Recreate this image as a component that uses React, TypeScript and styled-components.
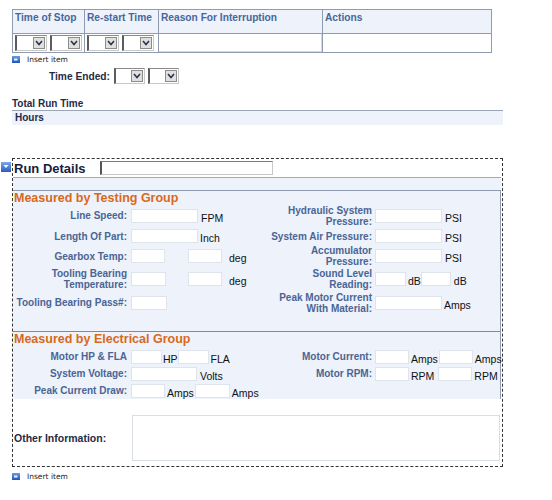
import React from "react";
import styled, { createGlobalStyle } from "styled-components";

const GlobalStyle = createGlobalStyle`
  body {
    margin: 0;
    background: #fff;
    font-family: "Liberation Sans", Arial, sans-serif;
  }
`;

const LINE = "#8e9bb0";
const PALE = "#edf2fb";

const Page = styled.div`
  padding: 9px 0 0 12px;
  width: 491px;
`;

const Table = styled.div`
  display: grid;
  grid-template-columns: 72px 74px 164px 1fr;
  width: 480px;
  box-sizing: border-box;
  border: 1px solid ${LINE};
`;

const HeadCell = styled.div<{ $last?: boolean }>`
  height: 21px;
  background: ${PALE};
  border-bottom: 1px solid ${LINE};
  border-right: ${(p) => (p.$last ? "none" : `1px solid ${LINE}`)};
  padding: 2px 0 0 2px;
  color: #47679a;
  font-weight: bold;
  font-size: 10.2px;
  line-height: 12px;
  white-space: nowrap;
`;

const DataCell = styled.div<{ $last?: boolean; $boxed?: boolean }>`
  height: 18px;
  display: flex;
  align-items: center;
  gap: 3px;
  padding-left: 2px;
  border-right: ${(p) => (p.$last ? "none" : `1px solid ${LINE}`)};
  box-shadow: ${(p) => (p.$boxed ? "inset -1px -1px 0 #d6d9df" : "none")};
`;

const SelectBox = styled.div<{ $w: number }>`
  display: inline-flex;
  align-items: center;
  justify-content: flex-end;
  width: ${(p) => p.$w}px;
  height: 16px;
  box-sizing: border-box;
  background: #fff;
  border-left: 2px solid #5c5c5c;
  border-top: 1px solid #8a8a8a;
  border-right: 1px solid #c9c9c9;
  border-bottom: 1px solid #c9c9c9;
  padding-right: 1px;
`;

const SelectButton = styled.div`
  width: 12px;
  height: 12px;
  box-sizing: border-box;
  background: #e2e0da;
  border: 1px solid #8c8c8c;
  display: flex;
  align-items: center;
  justify-content: center;
`;

const Select = ({ w = 32 }: { w?: number }) => (
  <SelectBox $w={w}>
    <SelectButton>
      <svg width="8" height="6" viewBox="0 0 8 6">
        <polyline points="1,1 4,4.5 7,1" fill="none" stroke="#24345a" strokeWidth="1.6" />
      </svg>
    </SelectButton>
  </SelectBox>
);

const InsertRow = styled.div<{ $top: number }>`
  display: flex;
  align-items: center;
  gap: 7px;
  margin-top: ${(p) => p.$top}px;
  height: 8px;
  font-family: "DejaVu Sans", Verdana, sans-serif;
  font-size: 7.5px;
  color: #222;
`;

const InsertIcon = () => (
  <svg width="8" height="7" viewBox="0 0 8 7">
    <defs>
      <linearGradient id="ig" x1="0" y1="0" x2="0" y2="1">
        <stop offset="0" stopColor="#6b9be0" />
        <stop offset="1" stopColor="#1f55b8" />
      </linearGradient>
    </defs>
    <rect width="8" height="7" fill="url(#ig)" />
    <rect x="2" y="2.5" width="3.5" height="2" fill="#e8f0ff" />
  </svg>
);

const TimeEndedRow = styled.div`
  display: flex;
  align-items: center;
  gap: 3px;
  margin-top: 5px;
  padding-left: 37px;
  height: 16px;
`;

const DarkLabel = styled.span`
  color: #1f2b48;
  font-weight: bold;
  font-size: 10.2px;
  margin-right: 1px;
`;

const TotalTitle = styled.div`
  margin-top: 14px;
  height: 12px;
  line-height: 12px;
  color: #1f2b48;
  font-weight: bold;
  font-size: 10px;
`;

const HoursBar = styled.div`
  border-top: 1px solid #9aa6b8;
  background: ${PALE};
  height: 14px;
  line-height: 14px;
  padding-left: 3px;
  color: #1f2b48;
  font-weight: bold;
  font-size: 10px;
`;

const RunBox = styled.div`
  position: relative;
  margin-top: 33px;
  border: 1px dashed #333;
  padding-right: 1px;
`;

const Badge = styled.div`
  position: absolute;
  left: -12px;
  top: -1px;
  width: 10px;
  height: 10px;
`;

const RunHeader = styled.div`
  display: flex;
  align-items: center;
  height: 18px;
  padding-left: 1px;
  border-bottom: 1px solid #a0aabb;
`;

const RunTitle = styled.div`
  width: 86px;
  color: #13213e;
  font-weight: bold;
  font-size: 13px;
`;

const TextInput = styled.div<{ $w: number; $h?: number }>`
  width: ${(p) => p.$w}px;
  height: ${(p) => p.$h ?? 14}px;
  box-sizing: border-box;
  background: #fff;
  border: 1px solid #dfe3ea;
  flex: none;
`;

const HeaderInput = styled(TextInput)`
  border-left: 2px solid #555;
  border-top: 1px solid #7a7a7a;
  border-right: 1px solid #c8c8c8;
  border-bottom: 1px solid #c8c8c8;
`;

const Band = styled.div`
  height: 12px;
  background: ${PALE};
  border-bottom: 1px solid ${LINE};
`;

const Group = styled.div<{ $rows: string; $bottom: number; $titleH: number; $last?: boolean }>`
  display: grid;
  grid-template-columns: 118px 124px 120px 1fr;
  grid-template-rows: ${(p) => p.$titleH}px ${(p) => p.$rows};
  padding-bottom: ${(p) => p.$bottom}px;
  background: ${PALE};
  border-right: 1px solid ${LINE};
  border-bottom: ${(p) => (p.$last ? "none" : "1px solid #7d8aa0")};
`;

const GroupTitle = styled.div`
  grid-column: 1 / -1;
  padding-left: 1px;
  color: #d9691a;
  font-weight: bold;
  font-size: 12.5px;
  line-height: 14px;
  white-space: nowrap;
`;

const FieldLabel = styled.div<{ $pad: number }>`
  display: flex;
  flex-direction: column;
  justify-content: center;
  align-items: flex-end;
  padding-right: ${(p) => p.$pad}px;
  color: #4a6594;
  font-weight: bold;
  font-size: 10px;
  line-height: 11px;
  white-space: nowrap;
`;

const FieldCell = styled.div`
  display: flex;
  align-items: center;
`;

const Unit = styled.span<{ $ml: number }>`
  margin-left: ${(p) => p.$ml}px;
  margin-top: 4px;
  color: #111;
  font-size: 10.5px;
  flex: none;
`;

const OtherRow = styled.div`
  display: grid;
  grid-template-columns: 118px 1fr;
  align-items: center;
  padding: 16px 1px 5px 1px;
`;

const OtherLabel = styled.div`
  color: #1f2b48;
  font-weight: bold;
  font-size: 10.5px;
`;

const TextArea = styled.div`
  height: 46px;
  box-sizing: border-box;
  background: #fff;
  border: 1px solid #d9dde4;
`;

type Part = { input?: number; unit?: string; ml?: number };
type Side = { label: string[]; parts: Part[] };
type Row = { left: Side; right: Side };

const testingRows: Row[] = [
  {
    left: { label: ["Line Speed:"], parts: [{ input: 67 }, { unit: "FPM", ml: 3 }] },
    right: { label: ["Hydraulic System", "Pressure:"], parts: [{ input: 67 }, { unit: "PSI", ml: 3 }] },
  },
  {
    left: { label: ["Length Of Part:"], parts: [{ input: 67 }, { unit: "Inch", ml: 2 }] },
    right: { label: ["System Air Pressure:"], parts: [{ input: 67 }, { unit: "PSI", ml: 3 }] },
  },
  {
    left: { label: ["Gearbox Temp:"], parts: [{ input: 34 }, { input: 34, ml: 23 }, { unit: "deg", ml: 7 }] },
    right: { label: ["Accumulator", "Pressure:"], parts: [{ input: 67 }, { unit: "PSI", ml: 3 }] },
  },
  {
    left: {
      label: ["Tooling Bearing", "Temperature:"],
      parts: [{ input: 35 }, { input: 34, ml: 22 }, { unit: "deg", ml: 7 }],
    },
    right: {
      label: ["Sound Level", "Reading:"],
      parts: [{ input: 31 }, { unit: "dB", ml: 2 }, { input: 30, ml: 0 }, { unit: "dB", ml: 3 }],
    },
  },
  {
    left: { label: ["Tooling Bearing Pass#:"], parts: [{ input: 36 }] },
    right: { label: ["Peak Motor Current", "With Material:"], parts: [{ input: 67 }, { unit: "Amps", ml: 2 }] },
  },
];

const electricalRows: Row[] = [
  {
    left: {
      label: ["Motor HP & FLA"],
      parts: [{ input: 31 }, { unit: "HP", ml: 1 }, { input: 31, ml: 0 }, { unit: "FLA", ml: 2 }],
    },
    right: {
      label: ["Motor Current:"],
      parts: [{ input: 34 }, { unit: "Amps", ml: 2 }, { input: 34, ml: 1 }, { unit: "Amps", ml: 2 }],
    },
  },
  {
    left: { label: ["System Voltage:"], parts: [{ input: 66 }, { unit: "Volts", ml: 3 }] },
    right: {
      label: ["Motor RPM:"],
      parts: [{ input: 34 }, { unit: "RPM", ml: 2 }, { input: 34, ml: 4 }, { unit: "RPM", ml: 2 }],
    },
  },
  {
    left: {
      label: ["Peak Current Draw:"],
      parts: [{ input: 34 }, { unit: "Amps", ml: 2 }, { input: 35, ml: 1 }, { unit: "Amps", ml: 2 }],
    },
    right: { label: [], parts: [] },
  },
];

function Parts({ parts }: { parts: Part[] }) {
  return (
    <FieldCell>
      {parts.map((p, i) =>
        p.unit ? (
          <Unit key={i} $ml={p.ml ?? 0}>
            {p.unit}
          </Unit>
        ) : (
          <TextInput key={i} $w={p.input!} style={{ marginLeft: p.ml ?? 0 }} />
        )
      )}
    </FieldCell>
  );
}

function FieldRows({ rows }: { rows: Row[] }) {
  return (
    <>
      {rows.map((r, i) => (
        <React.Fragment key={i}>
          <FieldLabel $pad={4}>
            {r.left.label.map((l) => (
              <span key={l}>{l}</span>
            ))}
          </FieldLabel>
          <Parts parts={r.left.parts} />
          <FieldLabel $pad={3}>
            {r.right.label.map((l) => (
              <span key={l}>{l}</span>
            ))}
          </FieldLabel>
          <Parts parts={r.right.parts} />
        </React.Fragment>
      ))}
    </>
  );
}

const heads = ["Time of Stop", "Re-start Time", "Reason For Interruption", "Actions"];

function App() {
  return (
    <Page>
      <GlobalStyle />
      <Table>
        {heads.map((h, i) => (
          <HeadCell key={h} $last={i === heads.length - 1}>
            {h}
          </HeadCell>
        ))}
        <DataCell>
          <Select />
          <Select />
        </DataCell>
        <DataCell>
          <Select />
          <Select />
        </DataCell>
        <DataCell $boxed />
        <DataCell $last />
      </Table>
      <InsertRow $top={2}>
        <InsertIcon />
        Insert item
      </InsertRow>

      <TimeEndedRow>
        <DarkLabel>Time Ended:</DarkLabel>
        <Select w={31} />
        <Select w={31} />
      </TimeEndedRow>

      <TotalTitle>Total Run Time</TotalTitle>
      <HoursBar>Hours</HoursBar>

      <RunBox>
        <Badge>
          <svg width="10" height="10" viewBox="0 0 10 10">
            <defs>
              <linearGradient id="bg" x1="0" y1="0" x2="0" y2="1">
                <stop offset="0" stopColor="#7fa8e8" />
                <stop offset="1" stopColor="#2a5cc0" />
              </linearGradient>
            </defs>
            <rect width="10" height="10" fill="url(#bg)" />
            <polygon points="2.5,3 7.5,3 5,6" fill="#fff" />
          </svg>
        </Badge>
        <RunHeader>
          <RunTitle>Run Details</RunTitle>
          <HeaderInput $w={173} />
        </RunHeader>
        <Band />

        <Group $titleH={13} $rows="23px 18px 22px 24px 23px" $bottom={17}>
          <GroupTitle>Measured by Testing Group</GroupTitle>
          <FieldRows rows={testingRows} />
        </Group>

        <Group $titleH={16} $rows="17px 17px 17px" $bottom={0} $last>
          <GroupTitle>Measured by Electrical Group</GroupTitle>
          <FieldRows rows={electricalRows} />
        </Group>

        <OtherRow>
          <OtherLabel>Other Information:</OtherLabel>
          <TextArea />
        </OtherRow>
      </RunBox>

      <InsertRow $top={5}>
        <InsertIcon />
        Insert item
      </InsertRow>
    </Page>
  );
}

export default App;
